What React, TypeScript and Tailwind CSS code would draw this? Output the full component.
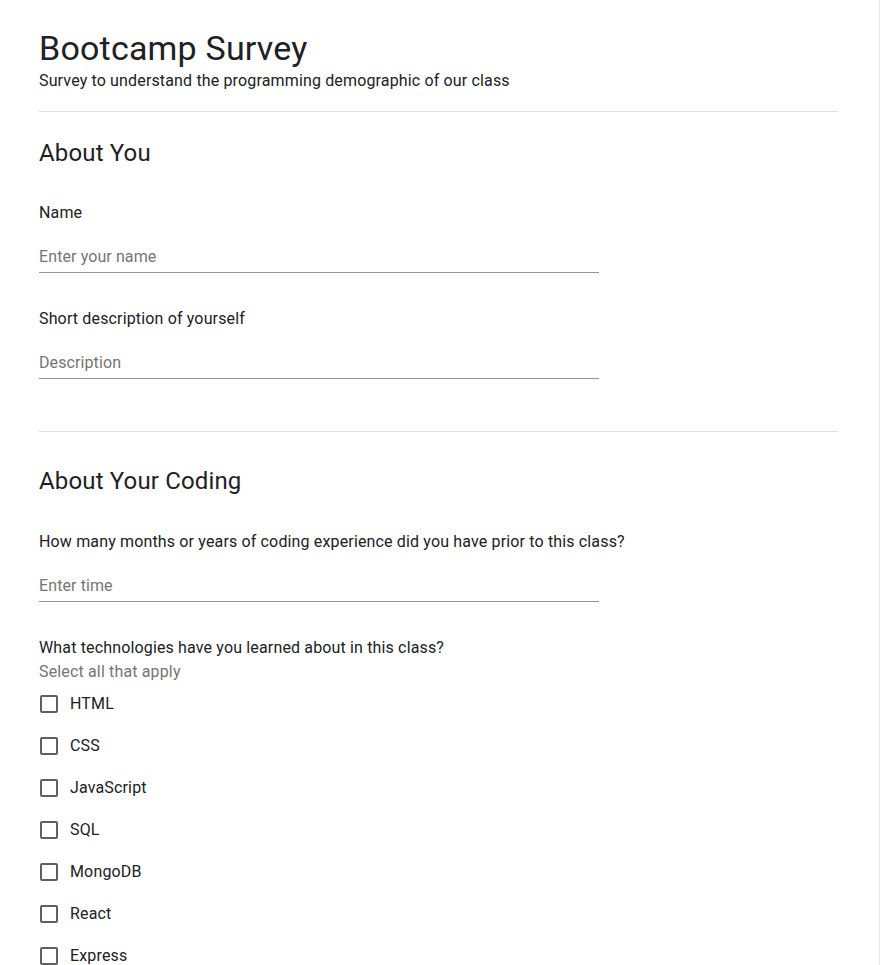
import { useState } from 'react';

const techs = ['HTML', 'CSS', 'JavaScript', 'SQL', 'MongoDB', 'React', 'Express'];

const TextField = ({ placeholder, className }: { placeholder: string; className?: string }) => (
	<input
		type="text"
		placeholder={placeholder}
		className={`block w-[560px] h-[29px] pt-0 pb-1 text-base leading-6 tracking-[0.1px] text-[#202124] placeholder-[#757575] border-b border-[#949494] bg-transparent outline-none ${className ?? ''}`}
	/>
);

const App = () => {
	const [checked, setChecked] = useState<Record<string, boolean>>({});

	return (
		<div className="min-h-screen w-full bg-white border-r border-[#e6e6e6] font-['Roboto',sans-serif] text-[#202124] tracking-[0.15px]">
			<div className="ml-[39px] w-[799px] pt-7 pb-10">
				<h1 className="text-[34px] leading-[41px] font-normal tracking-[0.2px]">Bootcamp Survey</h1>
				<p className="text-base leading-6">Survey to understand the programming demographic of our class</p>
				<hr className="mt-[18px] border-0 h-px bg-[#e0e0e0]" />

				<h2 className="mt-[25px] text-2xl leading-8 font-normal">About You</h2>
				<label className="block mt-8 text-base leading-6">Name</label>
				<TextField placeholder="Enter your name" className="mt-[19px]" />
				<label className="block mt-[34px] text-base leading-6">Short description of yourself</label>
				<TextField placeholder="Description" className="mt-[19px]" />

				<hr className="mt-[52px] border-0 h-px bg-[#e0e0e0]" />

				<h2 className="mt-[33px] text-2xl leading-8 font-normal">About Your Coding</h2>
				<label className="block mt-[33px] text-base leading-6">
					How many months or years of coding experience did you have prior to this class?
				</label>
				<TextField placeholder="Enter time" className="mt-[19px]" />

				<p className="mt-[34px] text-base leading-6">What technologies have you learned about in this class?</p>
				<p className="text-base leading-6 text-[#757575]">Select all that apply</p>
				<div className="mt-2 flex flex-col gap-[18px]">
					{techs.map((t) => (
						<label key={t} className="flex items-center gap-3 text-base leading-6 cursor-pointer">
							<input
								type="checkbox"
								checked={!!checked[t]}
								onChange={(e) => setChecked({ ...checked, [t]: e.target.checked })}
								className="sr-only"
							/>
							<span className="ml-px w-[18px] h-[18px] border-2 border-[#5f5f5f] rounded-[2px]" />
							<span>{t}</span>
						</label>
					))}
				</div>
			</div>
		</div>
	);
};

export default App;
